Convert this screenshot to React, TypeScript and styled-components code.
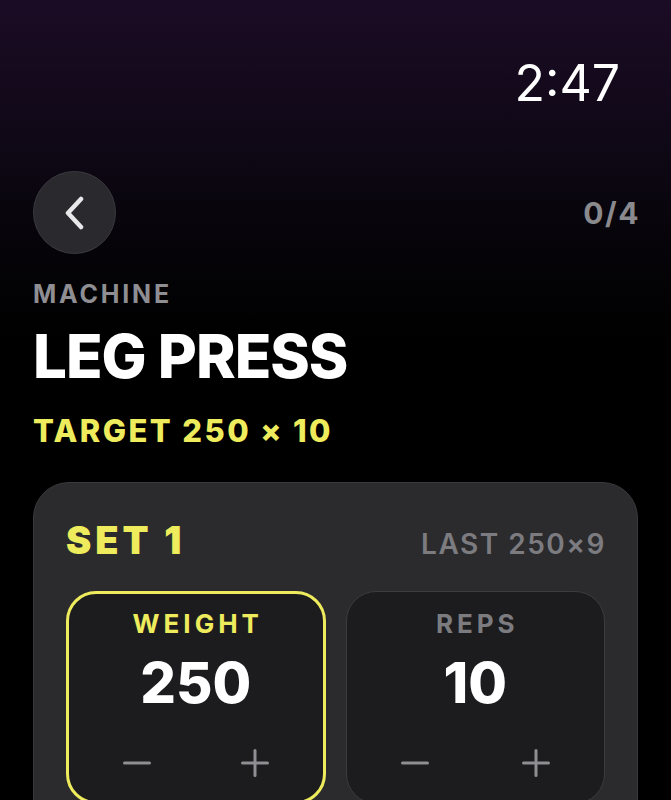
import React from "react";
import styled, { createGlobalStyle } from "styled-components";

const GlobalStyle = createGlobalStyle`
  html, body {
    margin: 0;
    padding: 0;
    background: #000;
  }
  body {
    font-family: Inter, "Noto Sans", "Liberation Sans", sans-serif;
    -webkit-font-smoothing: antialiased;
  }
`;

const YELLOW = "#eeec5c";
const GREY = "#8e8e93";

const Screen = styled.div`
  width: 671px;
  height: 800px;
  overflow: hidden;
  background: linear-gradient(
    180deg,
    #1b0c25 0%,
    #0f0816 18%,
    #060409 30%,
    #000 42%
  );
  color: #fff;
  display: flex;
  flex-direction: column;
`;

const StatusBar = styled.div`
  display: flex;
  justify-content: flex-end;
  padding: 58px 51px 0 0;
`;

const Time = styled.span`
  font-size: 50px;
  line-height: 50px;
  font-weight: 400;
`;

const Content = styled.div`
  display: flex;
  flex-direction: column;
  padding: 63px 33px 0 33px;
`;

const TopRow = styled.div`
  display: flex;
  align-items: center;
  justify-content: space-between;
`;

const BackButton = styled.button`
  width: 83px;
  height: 83px;
  border-radius: 50%;
  border: 1px solid #3a3a3f;
  background: #2a2a2e;
  display: flex;
  align-items: center;
  justify-content: center;
  padding: 0;
  cursor: pointer;
`;

const Progress = styled.span`
  font-size: 30px;
  font-weight: 700;
  color: #8a8a8e;
  letter-spacing: 1.5px;
  margin-right: -2px;
`;

const Eyebrow = styled.div`
  margin-top: 28px;
  font-size: 25px;
  line-height: 25px;
  font-weight: 700;
  letter-spacing: 2.8px;
  color: ${GREY};
`;

const Title = styled.h1`
  margin: 18px 0 0;
  font-size: 60px;
  line-height: 62px;
  font-weight: 800;
  letter-spacing: -1px;
`;

const Target = styled.div`
  margin-top: 28px;
  font-size: 31px;
  line-height: 31px;
  font-weight: 800;
  letter-spacing: 2.4px;
  color: ${YELLOW};
`;

const SetCard = styled.section`
  margin-top: 36px;
  border-radius: 36px;
  border: 1px solid #3a3a3e;
  background: #2b2b2e;
  padding: 38px 32px 40px;
  display: flex;
  flex-direction: column;
  gap: 30px;
`;

const SetHeader = styled.div`
  display: flex;
  align-items: baseline;
  justify-content: space-between;
`;

const SetTitle = styled.h2`
  margin: 0;
  font-size: 38px;
  line-height: 38px;
  font-weight: 900;
  letter-spacing: 4px;
  color: ${YELLOW};
`;

const LastSet = styled.span`
  font-size: 28px;
  font-weight: 600;
  color: #7c7c80;
  letter-spacing: 1.5px;
  margin-right: -1px;
`;

const Steppers = styled.div`
  display: grid;
  grid-template-columns: 1fr 1fr;
  gap: 20px;
`;

const Stepper = styled.div<{ $active?: boolean }>`
  border-radius: 30px;
  background: #1c1c1f;
  border: ${({ $active }) => ($active ? `3px solid ${YELLOW}` : "1.5px solid #3c3c40")};
  padding: ${({ $active }) => ($active ? "17px 0 24px" : "18.5px 0 25.5px")};
  display: flex;
  flex-direction: column;
  align-items: center;
`;

const StepLabel = styled.span<{ $active?: boolean }>`
  font-size: 26px;
  line-height: 26px;
  font-weight: 700;
  letter-spacing: 4px;
  margin-right: -4px;
  color: ${({ $active }) => ($active ? YELLOW : "#7c7c80")};
`;

const StepValue = styled.span`
  margin-top: 18px;
  font-size: 56px;
  line-height: 56px;
  font-weight: 800;
`;

const StepControls = styled.div`
  margin-top: 38px;
  width: 100%;
  display: flex;
  justify-content: space-between;
  padding: 0 54px;
  box-sizing: border-box;
`;

const StepButton = styled.button`
  width: 28px;
  height: 28px;
  padding: 0;
  border: none;
  background: transparent;
  display: flex;
  align-items: center;
  justify-content: center;
  cursor: pointer;
`;

const ChevronLeft = () => (
  <svg width="30" height="34" viewBox="0 0 30 34" fill="none">
    <polyline
      points="21,3 8,17 21,31"
      stroke="#e8e8ea"
      strokeWidth="4.5"
      strokeLinecap="round"
      strokeLinejoin="round"
    />
  </svg>
);

const Minus = () => (
  <svg width="28" height="28" viewBox="0 0 28 28">
    <line x1="1.5" y1="14" x2="26.5" y2="14" stroke={GREY} strokeWidth="3" strokeLinecap="round" />
  </svg>
);

const Plus = () => (
  <svg width="28" height="28" viewBox="0 0 28 28">
    <line x1="1.5" y1="14" x2="26.5" y2="14" stroke={GREY} strokeWidth="3" strokeLinecap="round" />
    <line x1="14" y1="1.5" x2="14" y2="26.5" stroke={GREY} strokeWidth="3" strokeLinecap="round" />
  </svg>
);

interface IStepperProps {
  label: string;
  value: number;
  active?: boolean;
}

const ValueStepper: React.FC<IStepperProps> = ({ label, value, active }) => (
  <Stepper $active={active}>
    <StepLabel $active={active}>{label}</StepLabel>
    <StepValue>{value}</StepValue>
    <StepControls>
      <StepButton aria-label="decrease">
        <Minus />
      </StepButton>
      <StepButton aria-label="increase">
        <Plus />
      </StepButton>
    </StepControls>
  </Stepper>
);

const App: React.FC = () => {
  return (
    <>
      <GlobalStyle />
      <Screen>
        <StatusBar>
          <Time>2:47</Time>
        </StatusBar>
        <Content>
          <TopRow>
            <BackButton aria-label="back">
              <ChevronLeft />
            </BackButton>
            <Progress>0/4</Progress>
          </TopRow>
          <Eyebrow>MACHINE</Eyebrow>
          <Title>LEG PRESS</Title>
          <Target>TARGET 250 × 10</Target>
          <SetCard>
            <SetHeader>
              <SetTitle>SET 1</SetTitle>
              <LastSet>LAST 250×9</LastSet>
            </SetHeader>
            <Steppers>
              <ValueStepper label="WEIGHT" value={250} active />
              <ValueStepper label="REPS" value={10} />
            </Steppers>
          </SetCard>
        </Content>
      </Screen>
    </>
  );
};

export default App;
